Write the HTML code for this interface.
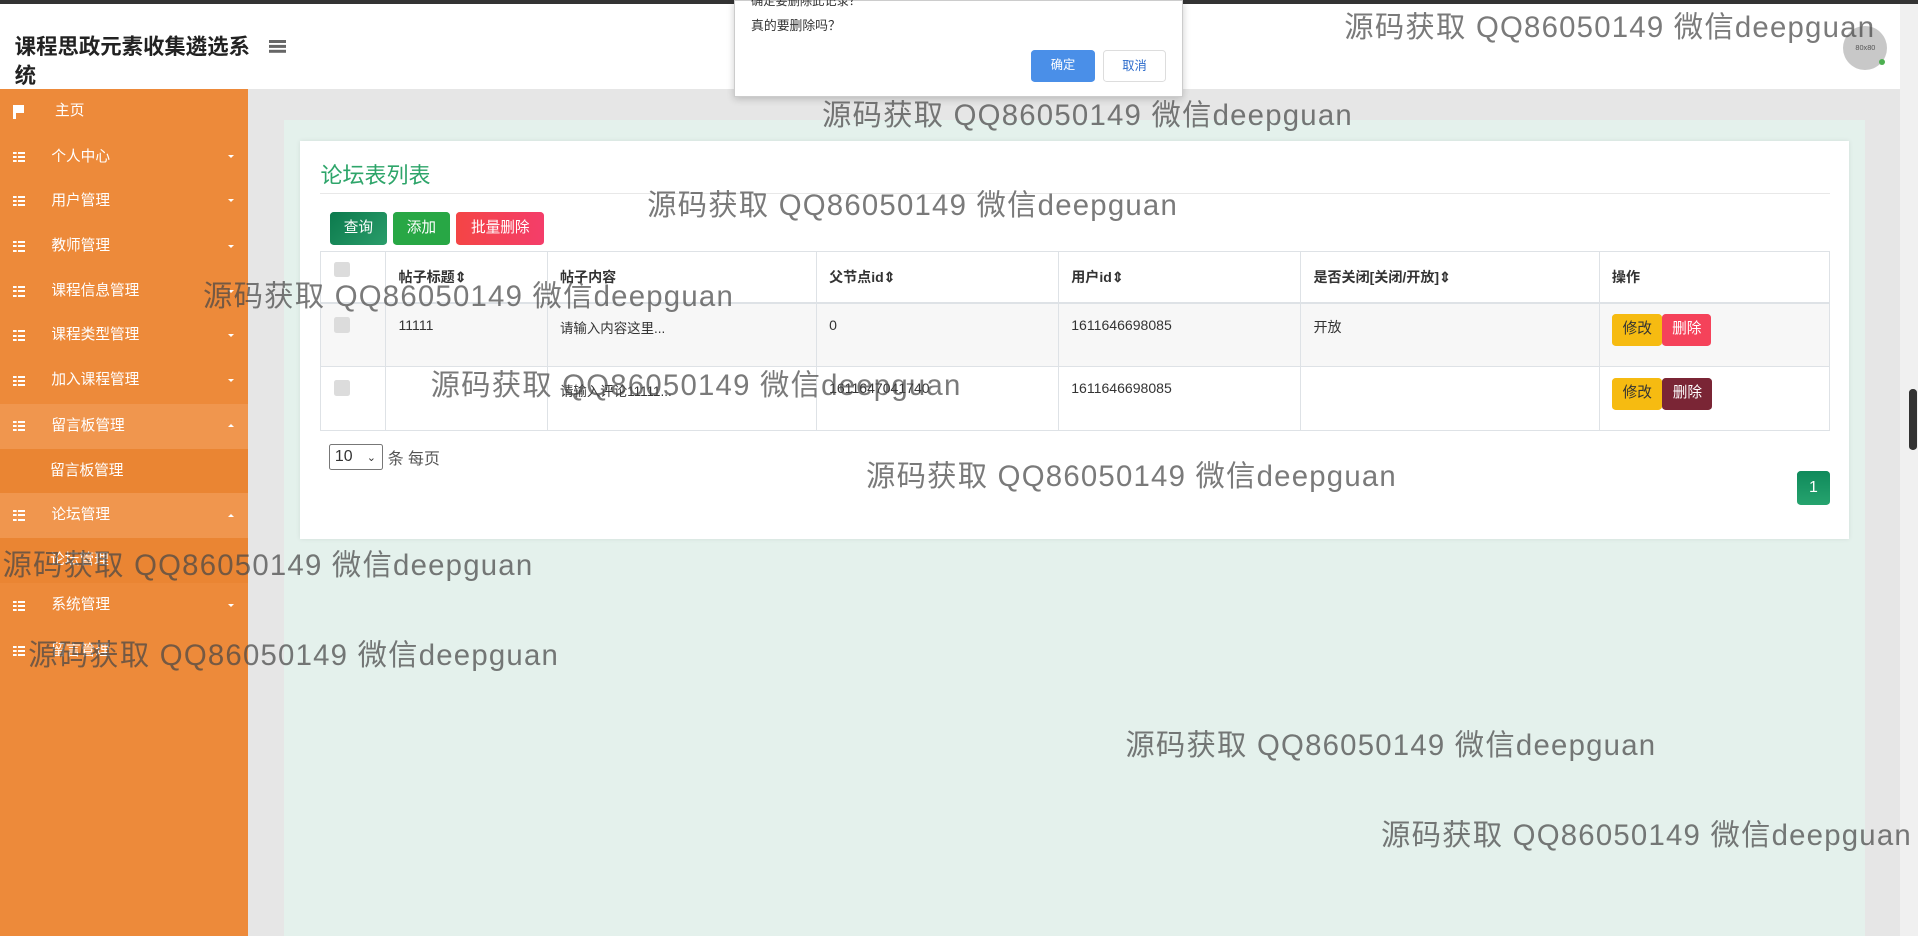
<!DOCTYPE html>
<html><head><meta charset="utf-8"><style>
*{box-sizing:border-box;margin:0;padding:0}
html,body{width:1918px;height:936px;overflow:hidden;background:#e6e6e6}
#z{zoom:1.22321;width:1568px;height:765px;position:relative;font-family:"Liberation Sans","Noto Sans CJK SC",sans-serif;font-size:12px;color:#333;overflow:hidden;background:#e6e6e6}
.a{position:absolute}
.top{left:0;top:0;width:1568px;height:3px;background:#333}
.hdr{left:0;top:3px;width:1553px;height:70px;background:#fff}
.side{left:0;top:73px;width:203px;height:700px;background:#ed8a3a}
.it{position:absolute;left:0;width:203px;height:37px;color:#fff;font-size:12px;line-height:37px}
.it .ic{position:absolute;left:11px;top:14px;width:10px;height:9px;background:
linear-gradient(#fff,#fff) 0 0/3px 2px no-repeat,linear-gradient(#fff,#fff) 4px 0/6px 2px no-repeat,
linear-gradient(#fff,#fff) 0 3.5px/3px 2px no-repeat,linear-gradient(#fff,#fff) 4px 3.5px/6px 2px no-repeat,
linear-gradient(#fff,#fff) 0 7px/3px 2px no-repeat,linear-gradient(#fff,#fff) 4px 7px/6px 2px no-repeat}
.it .t{position:absolute;left:42px}
.it .ar{position:absolute;left:186px;top:17px;border-left:3px solid transparent;border-right:3px solid transparent;border-top:3px solid #fff}
.it .up{border-top:none;border-bottom:3px solid #fff}
.wm{position:absolute;font-size:24px;letter-spacing:1px;color:rgba(70,70,70,.72);white-space:nowrap;font-family:"Liberation Sans","Noto Sans CJK SC",sans-serif}
table{border-collapse:collapse;position:absolute;left:262px;top:205px;width:1234px}
td,th{border:1px solid #dee2e6;text-align:left;vertical-align:top;font-size:11.5px;padding:0 10px}
th{height:41px;line-height:41px;font-weight:bold;border-bottom:2px solid #dee2e6}
td{height:52px;padding-top:11px}
.cb{display:inline-block;width:13px;height:13px;background:#dcdcdc;border-radius:2px}
.btn{position:absolute;color:#fff;font-size:12px;text-align:center;border-radius:3px}
</style></head><body><div id="z">
<div class="a top"></div>
<div class="a hdr"></div>
<div class="a" style="left:12px;top:27px;width:195px;font-size:17.5px;font-weight:bold;line-height:24px;color:#222">课程思政元素收集遴选系统</div>
<div class="a" style="left:220px;top:33px;width:14px;height:2px;background:#666;box-shadow:0 4px 0 #666,0 8px 0 #666"></div>
<div class="a" style="left:1507px;top:21px;width:36px;height:36px;border-radius:50%;background:#c8c8c8;font-size:6px;line-height:36px;text-align:center;color:#555">80x80</div>
<div class="a" style="left:1536px;top:48px;width:5px;height:5px;border-radius:50%;background:#4caf50"></div>
<div class="a" style="left:1553px;top:3px;width:15px;height:762px;background:#f0f0f0"></div>
<div class="a" style="left:1561px;top:318px;width:6px;height:50px;background:#333;border-radius:3px"></div>

<div class="a side"></div>
<div class="it" style="top:73px"><span class="a" style="left:11px;top:13px;width:2px;height:11px;background:#fff"></span><span class="a" style="left:13px;top:13px;width:7px;height:6px;background:#fff"></span><span class="t" style="left:45px">主页</span></div>
<div class="it" style="top:110px"><i class="ic"></i><span class="t">个人中心</span><i class="ar"></i></div>
<div class="it" style="top:146px"><i class="ic"></i><span class="t">用户管理</span><i class="ar"></i></div>
<div class="it" style="top:183px"><i class="ic"></i><span class="t">教师管理</span><i class="ar"></i></div>
<div class="it" style="top:220px"><i class="ic"></i><span class="t">课程信息管理</span><i class="ar"></i></div>
<div class="it" style="top:256px"><i class="ic"></i><span class="t">课程类型管理</span><i class="ar"></i></div>
<div class="it" style="top:293px"><i class="ic"></i><span class="t">加入课程管理</span><i class="ar"></i></div>
<div class="it" style="top:330px;background:#f0964e"><i class="ic"></i><span class="t">留言板管理</span><i class="ar up"></i></div>
<div class="it" style="top:367px;background:#ea8533"><span class="t" style="left:41px">留言板管理</span></div>
<div class="it" style="top:403px;background:#f0964e"><i class="ic"></i><span class="t">论坛管理</span><i class="ar up"></i></div>
<div class="it" style="top:440px;background:#ea8533"><span class="t" style="left:41px">论坛管理</span></div>
<div class="it" style="top:477px"><i class="ic"></i><span class="t">系统管理</span><i class="ar"></i></div>
<div class="it" style="top:514px"><i class="ic"></i><span class="t">留言管理</span></div>

<div class="a" style="left:232px;top:98px;width:1293px;height:667px;background:#e4f1ec"></div>
<div class="a" style="left:245px;top:115px;width:1267px;height:326px;background:#fff;box-shadow:0 0 4px rgba(0,0,0,.08)"></div>
<div class="a" style="left:262px;top:129px;font-size:18px;color:#2ea56a">论坛表列表</div>
<div class="a" style="left:262px;top:158px;width:1234px;height:1px;background:#e8e8e8"></div>
<div class="btn" style="left:270px;top:173px;width:46px;height:27px;line-height:27px;background:linear-gradient(135deg,#0c7a4d,#2a9d6a)">查询</div>
<div class="btn" style="left:321px;top:173px;width:47px;height:27px;line-height:27px;background:#28a745">添加</div>
<div class="btn" style="left:373px;top:173px;width:72px;height:27px;line-height:27px;background:linear-gradient(90deg,#f44545,#f43d6a)">批量删除</div>
<table>
<tr><th style="width:53px"><span class="cb" style="margin-top:8px;vertical-align:top"></span></th><th style="width:132px">帖子标题⇕</th><th style="width:220px">帖子内容</th><th style="width:198px">父节点id⇕</th><th style="width:198px">用户id⇕</th><th style="width:244px">是否关闭[关闭/开放]⇕</th><th>操作</th></tr>
<tr style="background:#f7f7f7"><td><span class="cb"></span></td><td>11111</td><td style="font-size:11px">请输入内容这里...</td><td>0</td><td>1611646698085</td><td>开放</td><td></td></tr>
<tr><td><span class="cb"></span></td><td></td><td style="font-size:11px">请输入评论11111...</td><td>1611647041740</td><td>1611646698085</td><td></td><td></td></tr>
</table>
<div class="btn" style="left:1318px;top:257px;width:41px;height:26px;line-height:26px;background:#f6bb11;color:#333">修改</div>
<div class="btn" style="left:1359px;top:257px;width:40px;height:26px;line-height:26px;background:#f5425a">删除</div>
<div class="btn" style="left:1318px;top:309px;width:41px;height:26px;line-height:26px;background:#f6bb11;color:#333">修改</div>
<div class="btn" style="left:1359px;top:309px;width:41px;height:26px;line-height:26px;background:#7a2535">删除</div>
<div class="a" style="left:269px;top:363px;width:44px;height:21px;border:1px solid #777;border-radius:2px;font-size:13px;line-height:19px;padding-left:4px;background:#fff">10 <span style="font-size:9px;margin-left:8px">⌄</span></div>
<div class="a" style="left:317px;top:365px;font-size:13px;color:#555">条 每页</div>
<div class="btn" style="left:1469px;top:385px;width:27px;height:28px;line-height:28px;font-size:13px;background:linear-gradient(#0f8a5b,#26a36e)">1</div>

<div class="a" style="left:600px;top:0;width:367px;height:79px;background:#fff;border:1px solid #ccc;box-shadow:0 2px 6px rgba(0,0,0,.2)"></div>
<div class="a" style="left:614px;top:-7px;font-size:10px;color:#333">确定要删除此记录？</div>
<div class="a" style="left:614px;top:12px;font-size:10.5px;color:#333">真的要删除吗？</div>
<div class="btn" style="left:843px;top:41px;width:52px;height:26px;line-height:26px;background:#4a8fe8;font-size:10px">确定</div>
<div class="btn" style="left:902px;top:41px;width:51px;height:26px;line-height:26px;background:#fff;border:1px solid #ddd;color:#2a6acb;font-size:10px">取消</div>

<div class="wm" style="left:1099px;top:3px">源码获取 QQ86050149 微信deepguan</div>
<div class="wm" style="left:672px;top:75px">源码获取 QQ86050149 微信deepguan</div>
<div class="wm" style="left:529px;top:149px">源码获取 QQ86050149 微信deepguan</div>
<div class="wm" style="left:166px;top:223px">源码获取 QQ86050149 微信deepguan</div>
<div class="wm" style="left:352px;top:296px">源码获取 QQ86050149 微信deepguan</div>
<div class="wm" style="left:708px;top:370px">源码获取 QQ86050149 微信deepguan</div>
<div class="wm" style="left:2px;top:443px">源码获取 QQ86050149 微信deepguan</div>
<div class="wm" style="left:23px;top:517px">源码获取 QQ86050149 微信deepguan</div>
<div class="wm" style="left:920px;top:590px">源码获取 QQ86050149 微信deepguan</div>
<div class="wm" style="left:1129px;top:664px">源码获取 QQ86050149 微信deepguan</div>
</div></body></html>
